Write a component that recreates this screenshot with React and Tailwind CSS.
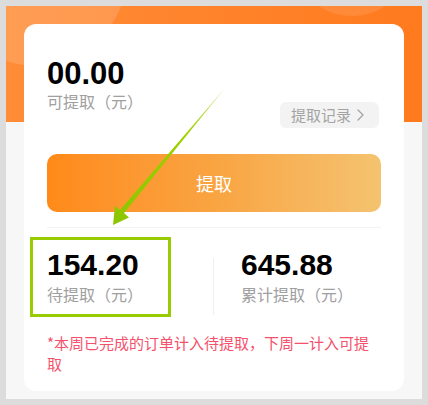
import React from 'react'

const cjk = { fontFamily: '"Noto Sans CJK SC", "Noto Sans", sans-serif' }
const num = { fontFamily: '"Liberation Sans", Arial, sans-serif' }

function Arrow() {
  return (
    <svg className="pointer-events-none absolute left-0 top-0" width="428" height="405" viewBox="0 0 428 405">
      <defs>
        <linearGradient id="arrowGrad" x1="225" y1="88" x2="113" y2="225" gradientUnits="userSpaceOnUse">
          <stop offset="0" stopColor="#c6e36a" />
          <stop offset="0.35" stopColor="#9fd000" />
          <stop offset="1" stopColor="#8cc500" />
        </linearGradient>
      </defs>
      <polygon points="225,88 124,213 129,217.5 113,225 115,205.5 120,210" fill="url(#arrowGrad)" />
    </svg>
  )
}

export default function App() {
  return (
    <div className="relative h-[405px] w-[428px] overflow-hidden bg-[#dcdcdc] p-[6px]" style={cjk}>
      <div className="h-[393px] w-[416px] overflow-hidden bg-[#f7f7f7]">
        <div className="relative h-[116px] overflow-hidden bg-gradient-to-r from-[#ff8c36] to-[#ff7a1d]">
          <div className="absolute -left-[60px] -top-[120px] h-[180px] w-[180px] rounded-full bg-white/15" />
          <div className="absolute -top-[110px] right-[10px] h-[120px] w-[120px] rounded-full bg-white/10" />
        </div>

        <div className="relative mx-[18px] -mt-[98px] rounded-[12px] bg-white px-[23px] pb-[17px] pt-[35px]">
          <div className="flex items-start justify-between">
            <div>
              <div className="text-[31px] font-bold leading-[30px] text-black" style={num}>00.00</div>
              <div className="mt-[2px] text-[16px] leading-[20px] text-[#a0a0a0]">可提取（元）</div>
            </div>
            <div className="mr-[2px] mt-[43px] flex h-[26px] items-center gap-[5px] rounded-[6px] bg-[#f3f3f3] pl-[11px] pr-[14px] text-[15px] text-[#a3a3a3]">
              <span>提取记录</span>
              <svg width="9" height="14" viewBox="0 0 9 14" fill="none">
                <path d="M2 2l5 5-5 5" stroke="#a3a3a3" strokeWidth="1.3" strokeLinecap="round" strokeLinejoin="round" />
              </svg>
            </div>
          </div>

          <button className="mt-[26px] flex h-[58px] w-full items-center justify-center rounded-[10px] bg-gradient-to-r from-[#ff8a18] via-[#f9a441] to-[#f4c36f] text-[18px] text-white">
            提取
          </button>

          <div className="mt-[15px] h-px bg-[#f2f2f2]" />

          <div className="mt-[22px] flex items-start">
            <div className="w-[166px]">
              <div className="text-[30px] font-bold leading-[30px] text-black" style={num}>154.20</div>
              <div className="mt-[4px] text-[16px] leading-[20px] text-[#a0a0a0]">待提取（元）</div>
            </div>
            <div className="mt-[8px] h-[57px] w-px bg-[#efefef]" />
            <div className="flex-1 pl-[27px]">
              <div className="text-[30px] font-bold leading-[30px] text-black" style={num}>645.88</div>
              <div className="mt-[4px] text-[16px] leading-[20px] text-[#a0a0a0]">累计提取（元）</div>
            </div>
          </div>

          <p className="mt-[17px] text-[15px] leading-[21px] text-[#f4516c]">*本周已完成的订单计入待提取，下周一计入可提取</p>
        </div>
      </div>

      <div className="pointer-events-none absolute left-[30px] top-[237px] h-[80px] w-[141px] border-[3px] border-[#99cc00]" />
      <Arrow />
    </div>
  )
}
